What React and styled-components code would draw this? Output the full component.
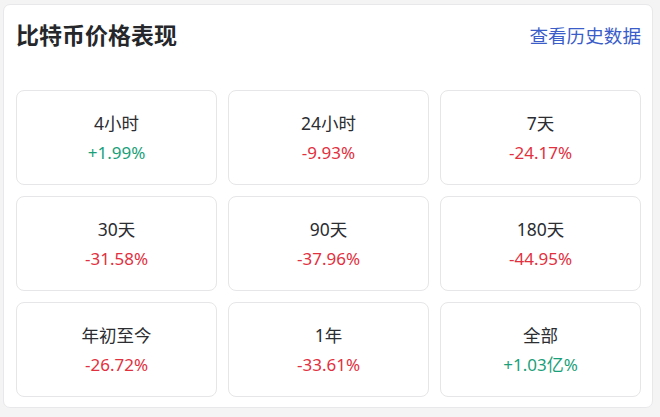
import React from 'react';
import styled, { createGlobalStyle } from 'styled-components';

const GlobalStyle = createGlobalStyle`
  html, body {
    margin: 0;
    background: #f4f4f5;
  }
  body {
    padding: 4px 7px 0 3px;
    font-family: "Noto Sans", "Noto Sans CJK SC", sans-serif;
  }
`;

const Card = styled.div`
  width: 650px;
  height: 404px;
  box-sizing: border-box;
  background: #fff;
  border: 1px solid #e8e8ea;
  border-radius: 7px;
  padding: 0 11px 11px 12px;
`;

const Header = styled.div`
  height: 58px;
  display: flex;
  align-items: center;
  justify-content: space-between;
`;

const Title = styled.h2`
  margin: 0;
  font-size: 23px;
  font-weight: 700;
  color: #25272b;
  font-family: "Noto Sans CJK SC", sans-serif;
`;

const Link = styled.a`
  font-size: 18.6px;
  color: #3b5dc9;
  text-decoration: none;
  font-family: "Noto Sans CJK SC", sans-serif;
`;

const Grid = styled.div`
  margin-top: 27px;
  display: grid;
  grid-template-columns: repeat(3, 201px);
  grid-auto-rows: 95px;
  gap: 11px;
`;

const Tile = styled.div`
  border: 1px solid #e6e6e8;
  border-radius: 8px;
  display: flex;
  flex-direction: column;
  align-items: center;
  justify-content: center;
  gap: 2px;
`;

const Label = styled.div`
  font-size: 17.5px;
  line-height: 27px;
  color: #2b2d31;
`;

const Value = styled.div`
  font-size: 17px;
  line-height: 27px;
  color: ${p => (p.$up ? '#1a9f7a' : '#e2303e')};
`;

const data = [
  ['4小时', '+1.99%'],
  ['24小时', '-9.93%'],
  ['7天', '-24.17%'],
  ['30天', '-31.58%'],
  ['90天', '-37.96%'],
  ['180天', '-44.95%'],
  ['年初至今', '-26.72%'],
  ['1年', '-33.61%'],
  ['全部', '+1.03亿%'],
];

export default function App() {
  return (
    <>
      <GlobalStyle />
      <Card>
        <Header>
          <Title>比特币价格表现</Title>
          <Link href="#">查看历史数据</Link>
        </Header>
        <Grid>
          {data.map(([label, value]) => (
            <Tile key={label}>
              <Label>{label}</Label>
              <Value $up={value.startsWith('+')}>{value}</Value>
            </Tile>
          ))}
        </Grid>
      </Card>
    </>
  );
}
